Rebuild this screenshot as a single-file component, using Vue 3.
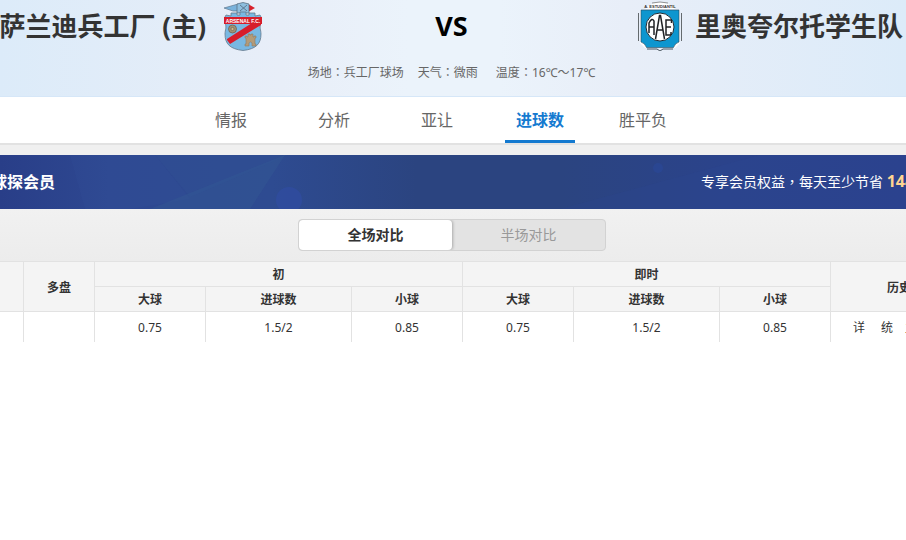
<template>
  <div class="page">

    <!-- Cabecera del partido -->
    <header class="match-head">
      <div class="team home">
        <h2 class="team-name">萨兰迪兵工厂 (主)</h2>
        <svg class="crest" viewBox="0 0 50 50" aria-hidden="true">
          <path d="M20 3 L6 7 L15 10 L20 10 Z" fill="#7ab3dc" stroke="#60798e" stroke-width=".7" />
          <path d="M30 3 L37 7 L30 11 Z" fill="#d8202b" />
          <path d="M19 12 V3 L25 1.500 L31 3 V12 Z" fill="#8ebfdf" stroke="#5c7184" stroke-width=".8" />
          <path d="M22 4 L29 10 M29 4 L22 10" stroke="#52667b" stroke-width=".8" />
          <path d="M7 16 L8 14 L13 15 V12 H19 V14 H22 V11 H28 V14 H31 V12 H37 V15 L42 14 L43 16 V22 C41 26 43 29 43 33 C43 43 38 48 25 49.500 C12 48 7 43 7 33 C7 29 9 26 7 22 Z"
            fill="#79b8e2" stroke="#64798b" stroke-width=".8" />
          <path d="M38 22 H43 V24 L12 43 L9 39 V38 L34 22 Z" fill="#d71d2b" />
          <rect x="6" y="16" width="38" height="7" fill="#d71d2b" />
          <text class="crest-text" x="25" y="21.500" text-anchor="middle" font-size="5" font-weight="700" fill="#fff">ARSENAL F.C.</text>
          <circle cx="14.500" cy="28" r="4" fill="#a59273" stroke="#6b6558" stroke-width=".8" />
          <circle cx="14.500" cy="28" r="1.600" fill="#d1b98a" stroke="#6b6558" stroke-width=".7" />
          <path d="M27 45 V43 H28 V37 H27 V35 H29 V36 H30 V33 H32 V34 H33 V33 H35 V36 H36 V35 H38 V37 H37 V43 H38 V45 H34 V42 Q32.500 40 31 42 V45 Z"
            fill="#b39b78" stroke="#8d7c66" stroke-width=".6" />
        </svg>
      </div>

      <div class="match-info">
        <div class="versus">VS</div>
        <p class="conditions">
          <span>场地<span class="mark">：</span>兵工厂球场</span>
          <span>天气<span class="mark">：</span>微雨</span>
          <span class="temp">温度<span class="mark">：</span>16℃～17℃</span>
        </p>
      </div>

      <div class="team away">
        <svg class="crest" viewBox="0 0 50 50" aria-hidden="true">
          <path d="M10 8 Q16 1.500 25 1 Q34 1.500 40 8 Z" fill="#fff" />
          <path d="M17 2 Q25 0 33 2" fill="none" stroke="#777" stroke-width=".8" />
          <text class="crest-text" x="25" y="7" text-anchor="middle" font-size="4" font-weight="700" fill="#333">A. ESTUDIANTIL</text>
          <path d="M5 9 V42 L10 47 H40 L45 42 V9 Z" fill="#fff" />
          <path d="M3.500 12 V40 M46.500 12 V40" stroke="#646a6e" stroke-width="1" />
          <path d="M6 9 H44 V41 Q40 42 38.500 46.500 H11.500 Q10 42 6 41 Z" fill="#0d96cf" stroke="#27465b" stroke-width=".6" />
          <path d="M12 48 H22 L25 50 L28 48 H38" fill="none" stroke="#46535c" stroke-width="1" />
          <circle cx="25" cy="26" r="14" fill="#fff" stroke="#202b33" stroke-width="1" />
          <g fill="none" stroke="#202225" stroke-width="1.500">
            <path d="M14 32 V22 Q17 16 19 20 V34 M14 26 H19" />
            <path d="M20.500 38 L24.500 14.500 H25.500 L29.500 38 M22 29 H28" />
            <path d="M36.500 19 H31 V34 H36 M31 26 H36 M36.500 19 V22 M36 34 V31" />
          </g>
        </svg>
        <h2 class="team-name">里奥夸尔托学生队</h2>
      </div>
    </header>

    <!-- Pestañas -->
    <nav class="tabs">
      <div class="tabs-inner">
        <a v-for="t in tabs" :key="t" href="#" class="tab" :class="{ active: t === tabActiva }"
          @click.prevent="tabActiva = t">{{ t }}</a>
      </div>
    </nav>

    <!-- Banner de socios -->
    <section class="vip">
      <svg class="vip-art" viewBox="0 0 906 54" preserveAspectRatio="none" aria-hidden="true">
        <path d="M70 0 H155 L190 44 L130 54 H85 Z" fill="#3656a0" opacity=".15" />
        <path d="M150 54 L285 0 L250 54 Z" fill="#3c6a98" opacity=".22" />
        <path d="M155 0 H288 L190 42 Z" fill="#365b98" opacity=".15" />
        <circle cx="289" cy="45" r="13" fill="#304da5" opacity=".6" />
        <circle cx="658" cy="13" r="5" fill="#2b4ba3" opacity=".4" />
        <path d="M560 54 L760 0 H906 V54 Z" fill="#2e4a97" opacity=".15" />
      </svg>
      <div class="vip-inner">
        <strong class="vip-title">球探会员</strong>
        <p class="vip-text">专享会员权益<span class="mark">，</span>每天至少节省 <b>144</b></p>
      </div>
    </section>

    <!-- Comparativa -->
    <div class="switch-bar">
      <div class="switch">
        <button v-for="m in modos" :key="m" type="button" class="switch-btn" :class="{ on: m === modo }"
          @click="modo = m">{{ m }}</button>
      </div>
    </div>

    <div class="odds-wrap">
      <table class="odds">
        <colgroup>
          <col class="c-company"><col class="c-multi">
          <col class="c-side"><col class="c-goals"><col class="c-side">
          <col class="c-side"><col class="c-goals"><col class="c-side">
          <col class="c-history">
        </colgroup>
        <thead>
          <tr>
            <th rowspan="2"></th>
            <th rowspan="2">多盘</th>
            <th colspan="3">初</th>
            <th colspan="3">即时</th>
            <th rowspan="2">历史</th>
          </tr>
          <tr>
            <th v-for="(c, i) in columnas" :key="i">{{ c }}</th>
          </tr>
        </thead>
        <tbody>
          <tr>
            <td></td>
            <td></td>
            <td v-for="(v, i) in cuotas" :key="i">{{ v }}</td>
            <td class="history">
              <a v-for="e in enlaces" :key="e" href="#" @click.prevent>{{ e }}</a>
            </td>
          </tr>
        </tbody>
      </table>
    </div>

  </div>
</template>

<script setup>
import { ref } from 'vue'

const tabs = ['情报', '分析', '亚让', '进球数', '胜平负']
const tabActiva = ref('进球数')

const modos = ['全场对比', '半场对比']
const modo = ref('全场对比')

// inicial + en vivo
const columnas = ['大球', '进球数', '小球', '大球', '进球数', '小球']
const cuotas   = ['0.75', '1.5/2', '0.85', '0.75', '1.5/2', '0.85']
const enlaces  = ['详', '统', '主']
</script>

<style>
body { margin: 0; background: #fff; }
</style>

<style scoped>
.page { overflow: hidden; font-family: "Noto Sans", "Noto Sans CJK SC", sans-serif; font-size: 12px; color: #333; }
p, h2 { margin: 0; }
a { color: inherit; text-decoration: none; }
/* puntuación centrada en su caja */
.mark { font-family: "Noto Sans CJK TC", sans-serif; }

.match-head { display: flex; justify-content: center; height: 96px; padding-right: 3px; border-bottom: 1px solid #d6e7f8; background: linear-gradient(90deg, #dcebf9 0%, #e8eef8 31%, #ebf3fb 45%, #ebf3fb 55%, #e8eef8 69%, #dcebf9 100%); }
.team       { display: flex; flex: none; width: 330px; gap: 10px; height: 52px; align-items: center; }
.home       { justify-content: flex-end; gap: 12px; }
.team-name  { font-size: 26px; line-height: 54px; font-weight: 700; white-space: nowrap; }
.crest      { width: 50px; height: 50px; flex: none; }
.crest-text { font-family: "Liberation Sans", sans-serif; }
.match-info { flex: none; width: 367px; text-align: center; }
.versus     { font-size: 27px; line-height: 52px; font-weight: 700; color: #000; }
.conditions { display: flex; justify-content: center; gap: 14px; line-height: 20px; padding-top: 10px; color: #666; white-space: nowrap; }
.temp       { padding-left: 4px; }

.tabs       { background: #fff; border-bottom: 2px solid #e2e2e2; }
.tabs-inner { display: flex; justify-content: center; gap: 33px; padding-right: 32px; }
.tab        { box-sizing: border-box; width: 70px; height: 46px; border-bottom: 3px solid transparent; font-size: 16px; line-height: 46px; text-align: center; color: #666; }
.tab.active { border-color: #147ad0; color: #147ad0; font-weight: 700; }

.vip        { position: relative; display: flex; justify-content: center; border-top: 10px solid #f0f0f0; background: linear-gradient(90deg, #293e88 0%, #2e4891 12%, #2e4b91 30%, #2b4480 46%, #2b4480 62%, #2b438b 80%, #2b418c 100%); color: #fff; }
.vip-art    { position: absolute; inset: 0; width: 100%; height: 100%; }
.vip-inner  { position: relative; box-sizing: border-box; display: flex; flex: none; justify-content: space-between; align-items: center; width: 1028px; height: 54px; padding: 0 0 2px 52px; }
.vip-title  { font-size: 16px; }
.vip-text   { width: 266px; font-size: 14px; white-space: nowrap; }
.vip-text b { font-size: 16px; color: #ffd591; }

.switch-bar { display: flex; justify-content: center; padding: 10px 2px 10px 0; background: linear-gradient(#f1f1f1, #ececec); }
.switch     { box-sizing: border-box; display: flex; width: 308px; height: 32px; border: 1px solid #d2d2d2; border-radius: 4px; background: #e3e3e3; overflow: hidden; }
.switch-btn { flex: 1; padding: 0 0 2px; border: none; background: transparent; font-family: inherit; font-size: 14px; color: #999; cursor: pointer; }
.switch-btn.on { border-radius: 4px; background: #fff; box-shadow: 1px 0 3px rgba(0,0,0,.25); color: #333; font-weight: 700; }

.odds-wrap  { display: flex; justify-content: center; }
.odds       { flex: none; width: 1028px; table-layout: fixed; border-collapse: separate; border-spacing: 0; text-align: center; }
.c-company  { width: 84px; }
.c-multi    { width: 71px; }
.c-side     { width: 111px; }
.c-goals    { width: 146px; }
.c-history  { width: 137px; }
.odds th    { height: 24px; padding: 2px 0 0; box-sizing: border-box; height: 25px; border-top: 1px solid #e2e2e2; border-left: 1px solid #e2e2e2; background: #f4f4f4; line-height: 22px; font-weight: 700; }
.odds td    { padding: 2px 0 0; border-left: 1px solid #e2e2e2; line-height: 28px; }
.odds tbody tr:first-child td { border-top: 1px solid #e2e2e2; }
.odds .history { padding-left: 14px; text-align: left; white-space: nowrap; }
.history a  { display: inline-block; margin: 0 8px; }
.history a:last-child { margin-left: 4px; }
</style>
